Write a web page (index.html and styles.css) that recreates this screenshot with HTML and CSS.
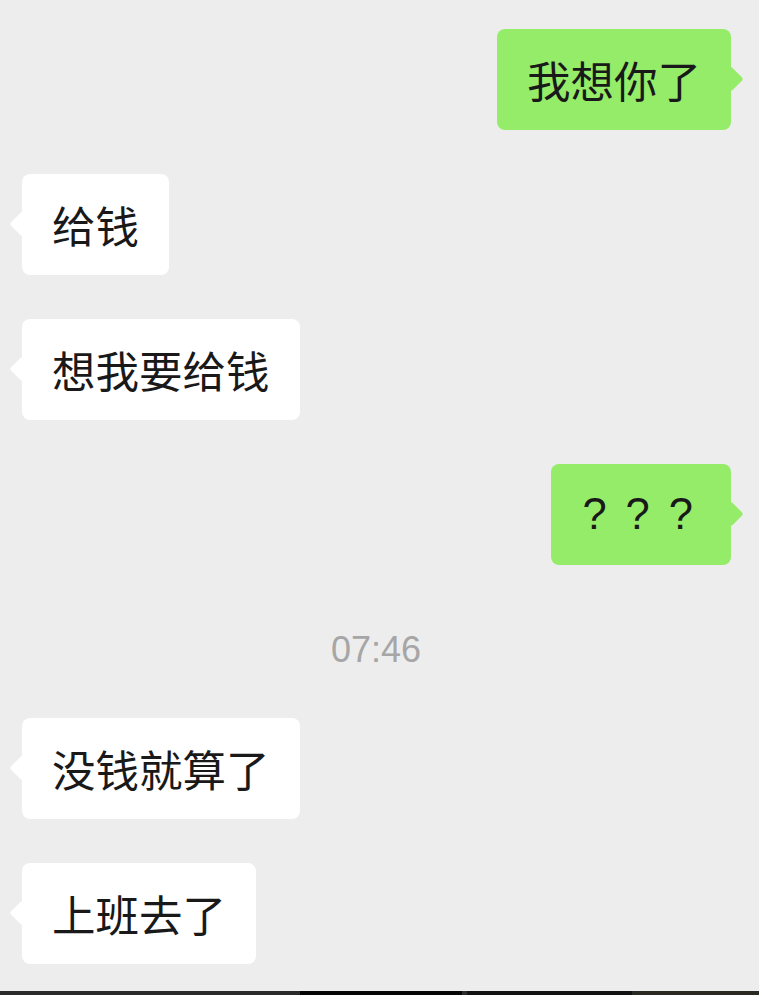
FILE: index.html
```html
<!DOCTYPE html>
<html lang="zh-CN">
<head>
    <meta charset="UTF-8">
    <meta name="viewport" content="width=device-width, initial-scale=1.0">
    <title>聊天</title>
    <link rel="stylesheet" href="styles.css">
</head>
<body>

<div class="page">

    <!-- Chat messages -->
    <div class="chat">
        <div class="msg msg-me">我想你了</div>
        <div class="msg msg-other">给钱</div>
        <div class="msg msg-other">想我要给钱</div>
        <div class="msg msg-me msg-q">???</div>
        <div class="time">07:46</div>
        <div class="msg msg-other">没钱就算了</div>
        <div class="msg msg-other">上班去了</div>
    </div>

    <!-- bottom edge of the screenshot -->
    <div class="edge"></div>

</div>

</body>
</html>
```

FILE: styles.css
```css
/* General Styling */
body {
    margin: 0;
    padding: 0;
    background-color: #ededed;
    font-family: "Noto Sans CJK SC", "Noto Sans", sans-serif;
}

.page {
    min-height: 100vh;
    display: flex;
    flex-direction: column;
}

/* Chat list */
.chat {
    display: flex;
    flex-direction: column;
    gap: 44px;
    padding-top: 29px;
}

.msg {
    position: relative;
    padding: 20px 30px;
    font-size: 43.5px;
    line-height: 61px;
    color: #191919;
    border-radius: 8px;
}

.msg::before {
    content: "";
    position: absolute;
    top: 41px;
    width: 18px;
    height: 18px;
    border-radius: 3px;
    transform: rotate(45deg);
}

.msg-me {
    align-self: flex-end;
    margin-right: 28px;
    background-color: #95ec69;
}

.msg-me::before {
    right: -9px;
    background-color: #95ec69;
}

.msg-other {
    align-self: flex-start;
    margin-left: 22px;
    background-color: #ffffff;
}

.msg-other::before {
    left: -9px;
    background-color: #ffffff;
}

.msg-q {
    font-family: "Liberation Sans", Arial, sans-serif;
    letter-spacing: 19px;
    padding-left: 31px;
    padding-right: 19px;
}

/* Timestamp */
.time {
    align-self: center;
    margin-right: 7px;
    padding: 21px 0 4px;
    font-family: "Liberation Sans", Arial, sans-serif;
    font-size: 36px;
    line-height: 40px;
    color: #a6a6a6;
}

/* Bottom edge */
.edge {
    margin-top: auto;
    height: 4px;
    background: linear-gradient(to right, #2a2a2a 0, #2a2a2a 300px, #050505 300px, #050505 462px, #2c2c2c 462px, #2c2c2c 467px, #121212 467px, #121212 632px, #2b2a22 632px);
}
```
